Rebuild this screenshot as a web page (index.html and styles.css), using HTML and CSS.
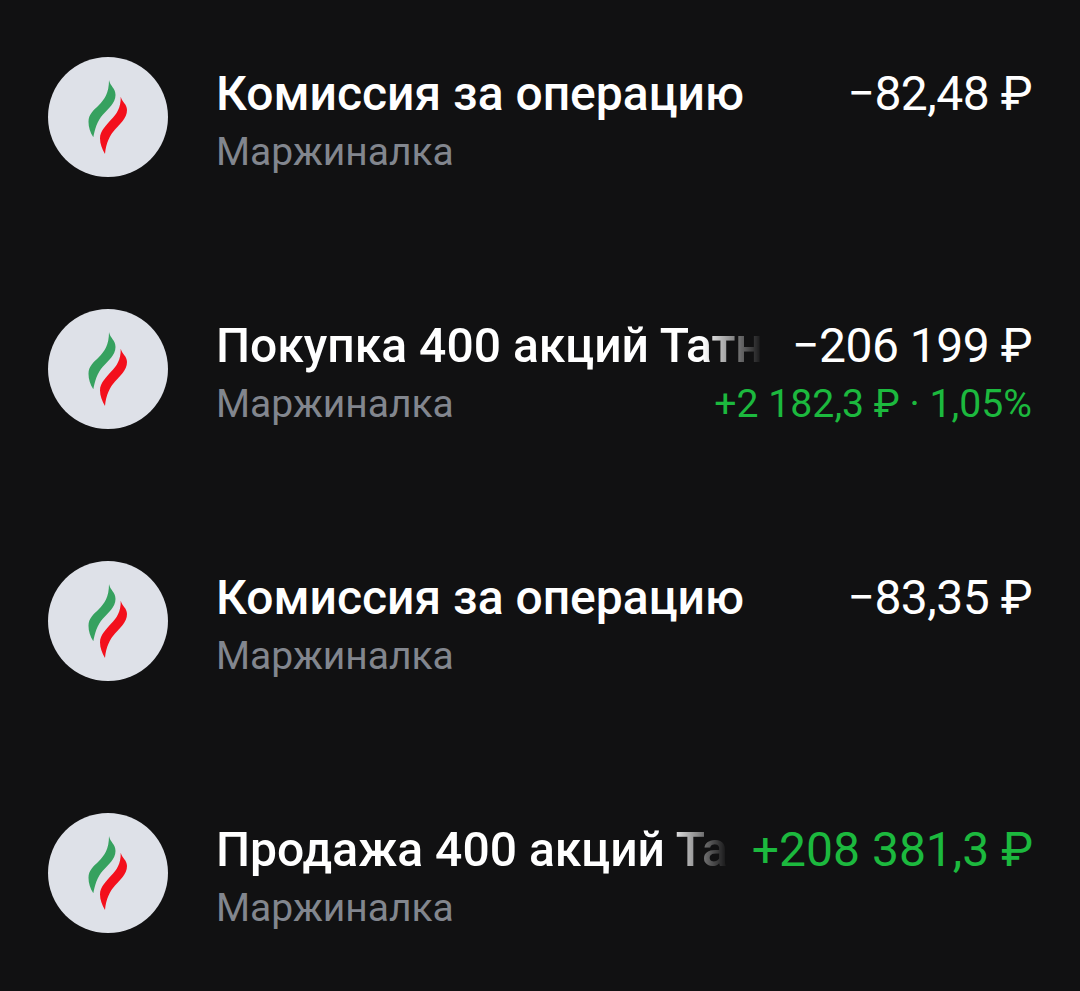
FILE: index.html
```html
<!DOCTYPE html>
<html lang="ru">
<head>
    <meta charset="UTF-8">
    <meta name="viewport" content="width=device-width, initial-scale=1.0">
    <title>Операции</title>
    <link rel="stylesheet" href="styles.css">
</head>
<body>
    <svg class="defs" width="0" height="0" aria-hidden="true">
        <symbol id="logo" viewBox="0 0 120 120">
            <path fill="#36a15f" d="M61 23C62 29 67.500 31 67.500 38C67.500 46 60 52 55 57.500C49 64 47 72 45.300 80.300C42 75 40.500 70 40.500 64.700C40.500 57 46 53 50.500 48.500C56.500 42.500 61 36 61 23Z"/>
            <path fill="#f3101c" d="M72.700 39.700C74 45 79 47 79 53C79 61 72 67 67 72.500C62 78 58 86 57 97C54 92 52 87 52 81.300C52 74 58.500 68 63.200 62.500C68.500 57 73 51 72.700 39.700Z"/>
        </symbol>
    </svg>
    <main class="list">
        <div class="row">
            <svg class="avatar"><use href="#logo"/></svg>
            <div class="info">
                <div class="line">
                    <div class="title">Комиссия за операцию</div>
                    <div class="amount">−82,48 ₽</div>
                </div>
                <div class="line">
                    <div class="sub">Маржиналка</div>
                </div>
            </div>
        </div>
        <div class="row">
            <svg class="avatar"><use href="#logo"/></svg>
            <div class="info">
                <div class="line">
                    <div class="title cut">Покупка 400 акций Татн</div>
                    <div class="amount">−206 199 ₽</div>
                </div>
                <div class="line">
                    <div class="sub">Маржиналка</div>
                    <div class="delta">+2 182,3 ₽ · 1,05%</div>
                </div>
            </div>
        </div>
        <div class="row">
            <svg class="avatar"><use href="#logo"/></svg>
            <div class="info">
                <div class="line">
                    <div class="title">Комиссия за операцию</div>
                    <div class="amount">−83,35 ₽</div>
                </div>
                <div class="line">
                    <div class="sub">Маржиналка</div>
                </div>
            </div>
        </div>
        <div class="row">
            <svg class="avatar"><use href="#logo"/></svg>
            <div class="info">
                <div class="line">
                    <div class="title cut">Продажа 400 акций Та</div>
                    <div class="amount plus">+208 381,3 ₽</div>
                </div>
                <div class="line">
                    <div class="sub">Маржиналка</div>
                </div>
            </div>
        </div>
    </main>
</body>
</html>
```

FILE: styles.css
```css
body {
    margin: 0;
    background-color: #111112;
    font-family: Roboto, "Noto Sans", sans-serif;
    color: #fff;
}
.defs {
    display: block;
}
.list {
    display: flex;
    flex-direction: column;
    gap: 132px;
    padding: 57px 48px 0;
}
.row {
    display: flex;
    gap: 48px;
    height: 120px;
}
.avatar {
    flex: none;
    width: 120px;
    height: 120px;
    border-radius: 50%;
    background-color: #dee1e8;
}
.info {
    flex: 1;
    min-width: 0;
}
.line {
    display: flex;
    justify-content: space-between;
    gap: 24px;
}
.title {
    font-size: 48px;
    line-height: 74px;
    font-weight: 500;
    white-space: nowrap;
}
.cut {
    -webkit-mask-image: linear-gradient(to right, #000 calc(100% - 60px), transparent);
    mask-image: linear-gradient(to right, #000 calc(100% - 60px), transparent);
}
.amount {
    flex: none;
    font-size: 48px;
    line-height: 74px;
    letter-spacing: -0.5px;
    white-space: nowrap;
}
.plus {
    letter-spacing: 0;
    color: #1cb93e;
}
.sub {
    font-size: 39px;
    line-height: 42px;
    color: #82868e;
}
.delta {
    font-size: 39.2px;
    line-height: 42px;
    color: #1cb93e;
    white-space: nowrap;
}
```
